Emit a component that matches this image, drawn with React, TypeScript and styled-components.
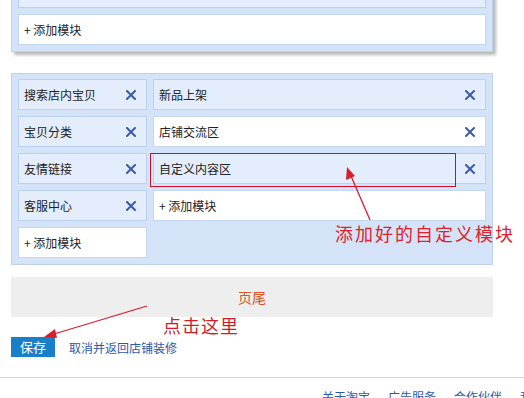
import React from "react";
import styled, { createGlobalStyle } from "styled-components";

const Global = createGlobalStyle`
  html, body { margin: 0; padding: 0; background: #fff; }
  body {
    width: 524px; height: 398px; overflow: hidden; position: relative;
    font-family: "Noto Sans CJK SC", "Liberation Sans", sans-serif;
    font-size: 12px; color: #222;
  }
`;

const Page = styled.div`
  position: relative;
  width: 524px;
  height: 398px;
  overflow: hidden;
`;

const Content = styled.div`
  width: 482px;
  margin-left: 11px;
  display: flex;
  flex-direction: column;
`;

const Panel = styled.div<{ $shadow?: boolean; $top?: number }>`
  box-sizing: border-box;
  background: #d4e3f7;
  border: 1px solid #bcd2ef;
  padding: 5px 6px 6px 6px;
  margin-top: ${(p) => p.$top ?? 0}px;
  box-shadow: ${(p) => (p.$shadow ? "3px 3px 3px rgba(0,0,0,0.28)" : "none")};
  display: flex;
  gap: 6px;
`;

const Column = styled.div<{ $w?: number }>`
  display: flex;
  flex-direction: column;
  gap: 6px;
  ${(p) => (p.$w ? `width: ${p.$w}px; flex: none;` : "flex: 1;")}
`;

const Box = styled.div<{ $kind: "module" | "white" | "add" }>`
  position: relative;
  box-sizing: border-box;
  height: 31px;
  display: flex;
  align-items: center;
  justify-content: space-between;
  padding: 0 10px 0 5px;
  border: 1px solid ${(p) => (p.$kind === "module" ? "#b9d0ee" : "#c3d7f0")};
  background: ${(p) => (p.$kind === "module" ? "#e3edfb" : "#ffffff")};
  color: #222;
  font-size: 12px;
  white-space: nowrap;
`;

const Highlight = styled.div`
  position: absolute;
  left: -4px;
  top: -1px;
  width: 306px;
  height: 34px;
  box-sizing: border-box;
  border: 1px solid #c8102e;
  pointer-events: none;
`;

const Close = () => (
  <svg width="10" height="10" viewBox="0 0 10 10">
    <path d="M1 1 L9 9 M9 1 L1 9" stroke="#3a5da6" strokeWidth="2" strokeLinecap="square" fill="none" />
  </svg>
);

const FooterBox = styled.div`
  margin-top: 12px;
  height: 40px;
  background: #eeeeee;
  display: flex;
  align-items: center;
  justify-content: center;
  color: #d4561f;
  font-size: 14px;
`;

const Actions = styled.div`
  margin-top: 20px;
  display: flex;
  align-items: center;
  gap: 14px;
`;

const SaveButton = styled.button`
  width: 44px;
  height: 20px;
  padding: 0;
  border: none;
  background: #1a7fc9;
  color: #fff;
  font-family: inherit;
  font-size: 13px;
  line-height: 20px;
`;

const CancelLink = styled.a`
  color: #2b59aa;
  font-size: 12px;
  text-decoration: none;
`;

const Rule = styled.div`
  margin-top: 20px;
  height: 1px;
  background: #d6d6d6;
  width: 524px;
`;

const FooterLinks = styled.div`
  display: flex;
  gap: 18px;
  padding-left: 322px;
  margin-top: 12px;
  white-space: nowrap;
  color: #2b59aa;
  font-size: 12px;
  line-height: 14px;
`;

const Note = styled.div<{ $x: number; $y: number; $c: string; $ls: number }>`
  position: absolute;
  left: ${(p) => p.$x}px;
  top: ${(p) => p.$y}px;
  color: ${(p) => p.$c};
  font-size: 18px;
  line-height: 20px;
  letter-spacing: ${(p) => p.$ls}px;
  white-space: nowrap;
  font-family: "Noto Sans CJK SC", sans-serif;
`;

const Overlay = styled.svg`
  position: absolute;
  left: 0;
  top: 0;
  pointer-events: none;
`;

const left = [
  { t: "搜索店内宝贝", k: "module" as const, x: true },
  { t: "宝贝分类", k: "module" as const, x: true },
  { t: "友情链接", k: "module" as const, x: true },
  { t: "客服中心", k: "module" as const, x: true },
  { t: "+ 添加模块", k: "add" as const, x: false },
];

const right = [
  { t: "新品上架", k: "module" as const, x: true, hl: false },
  { t: "店铺交流区", k: "white" as const, x: true, hl: false },
  { t: "自定义内容区", k: "module" as const, x: true, hl: true },
  { t: "+ 添加模块", k: "add" as const, x: false, hl: false },
];

export default function App() {
  return (
    <Page>
      <Global />
      <Content>
        <Panel $shadow $top={-29}>
          <Column>
            <Box $kind="module" />
            <Box $kind="add">+ 添加模块</Box>
          </Column>
        </Panel>
        <Panel $top={21}>
          <Column $w={129}>
            {left.map((r, i) => (
              <Box key={i} $kind={r.k}>
                <span>{r.t}</span>
                {r.x && <Close />}
              </Box>
            ))}
          </Column>
          <Column>
            {right.map((r, i) => (
              <Box key={i} $kind={r.k}>
                <span>{r.t}</span>
                {r.x && <Close />}
                {r.hl && <Highlight />}
              </Box>
            ))}
          </Column>
        </Panel>
        <FooterBox>页尾</FooterBox>
        <Actions>
          <SaveButton>保存</SaveButton>
          <CancelLink href="#">取消并返回店铺装修</CancelLink>
        </Actions>
      </Content>
      <Rule />
      <FooterLinks>
        <span>关于淘宝</span>
        <span>广告服务</span>
        <span>合作伙伴</span>
        <span>我要开店</span>
      </FooterLinks>
      <Note $x={335} $y={223} $c="#e0202c" $ls={2}>添加好的自定义模块</Note>
      <Note $x={163} $y={315} $c="#d01c2a" $ls={1}>点击这里</Note>
      <Overlay width="524" height="398" viewBox="0 0 524 398">
        <line x1="370" y1="220" x2="351" y2="176" stroke="#d81e2c" strokeWidth="1.3" />
        <polygon points="347,167 346,180 355,176" fill="#d81e2c" />
        <line x1="147" y1="306" x2="54" y2="334" stroke="#d81e2c" strokeWidth="1.3" />
        <polygon points="44,337 55,329 57,338" fill="#d81e2c" />
      </Overlay>
    </Page>
  );
}
